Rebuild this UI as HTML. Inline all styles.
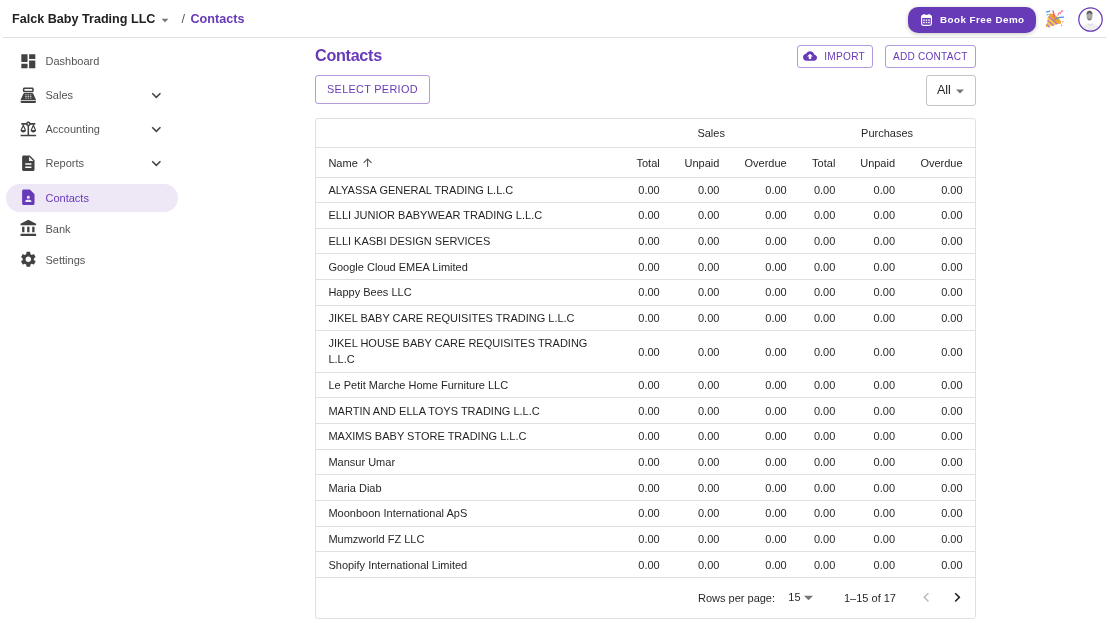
<!DOCTYPE html>
<html><head><meta charset="utf-8">
<style>
*{box-sizing:border-box;margin:0;padding:0}
html{background:#fff}html,body{width:1111px;height:623px;overflow:hidden;font-family:"Liberation Sans",sans-serif;color:rgba(0,0,0,0.87)}
.abs{position:absolute}
#topline{position:absolute;left:3px;top:37px;width:1103px;height:1px;background:#e0e0e0}
#company{position:absolute;left:12px;top:12px;font-size:12.6px;font-weight:700;color:#212121;white-space:nowrap;line-height:15px}
#caret1{position:absolute;left:161px;top:18px}
#slash{position:absolute;left:181.5px;top:12px;font-size:12.6px;color:#555;line-height:15px}
#crumb{position:absolute;left:190.5px;top:12px;font-size:12.6px;font-weight:700;color:#673ab7;line-height:15px}
#demo{position:absolute;left:908px;top:7px;width:128px;height:26px;border-radius:10px;background:#673ab7;box-shadow:0 1px 4px rgba(0,0,0,0.22);color:#fff;font-weight:700;font-size:9.8px;letter-spacing:0.48px;white-space:nowrap}
#demo svg{position:absolute;left:12.6px;top:6.8px}
#demo span{position:absolute;left:32px;top:6.9px;line-height:12px}
#emoji{position:absolute;left:1045px;top:9px}
#avatar{position:absolute;left:1077.7px;top:7.4px}
.nav{position:absolute;left:0;width:180px;height:28px}
.nav svg{position:absolute;left:18.5px}
.nav .t{position:absolute;left:45.5px;font-size:11px;color:rgba(0,0,0,0.7);line-height:13px}
.nav .chev{position:absolute;left:147px}
#title{position:absolute;left:315px;top:46px;font-size:16.2px;letter-spacing:-0.3px;font-weight:700;color:#673ab7;line-height:19px}
.btn{position:absolute;border:1px solid rgba(103,58,183,0.5);border-radius:3px;color:#673ab7;font-size:11px;letter-spacing:0.3px;white-space:nowrap;line-height:13px}
#card{position:absolute;left:315px;top:118px;width:661px;height:501px;border:1px solid #e0e0e0;border-radius:3px;overflow:hidden}
table{border-collapse:collapse;table-layout:fixed;width:659px;font-size:11px}
td,th{padding:5.3px 12.43px 3.77px;border-bottom:1px solid #e0e0e0;text-align:right;font-weight:400;line-height:15.6px;white-space:nowrap}
td.n,th.n{text-align:left;white-space:normal}
tr.g th{height:28px;text-align:center;padding:1.5px 12.43px 0}
tr.h th{height:30px;padding:3px 12.43px 0}

</style></head><body><div id="wrap" style="position:absolute;left:0;top:0;width:1111px;height:623px;will-change:transform">
<div id="topline"></div>
<div id="company">Falck Baby Trading LLC</div>
<svg id="caret1" width="8" height="5" viewBox="0 0 8 5"><path d="M0.5 0.8h7l-3.5 3.5z" fill="#757575"/></svg>
<div id="slash">/</div>
<div id="crumb">Contacts</div>

<div id="demo"><svg width="11" height="12" viewBox="0 0 11 12"><rect x="2" y="0" width="1.5" height="2.4" rx="0.5" fill="#fff"/><rect x="7.5" y="0" width="1.5" height="2.4" rx="0.5" fill="#fff"/><rect x="0.6" y="1.4" width="9.8" height="10" rx="1.8" fill="none" stroke="#fff" stroke-width="1.2"/><rect x="0.6" y="1.4" width="9.8" height="2.6" rx="1" fill="#fff"/><g fill="#fff"><rect x="2.2" y="5.4" width="1.6" height="1.4"/><rect x="4.7" y="5.4" width="1.6" height="1.4"/><rect x="7.2" y="5.4" width="1.6" height="1.4"/><rect x="2.2" y="7.8" width="1.6" height="1.4"/><rect x="4.7" y="7.8" width="1.6" height="1.4"/><rect x="7.2" y="7.8" width="1.6" height="1.4"/></g></svg><span>Book Free Demo</span></div>
<svg id="emoji" width="20" height="20" viewBox="0 0 20 20">
<path d="M0.6 18.6 L4.4 4.8 L16 14.2 Z" fill="#f6c843"/>
<ellipse cx="10.2" cy="9.5" rx="7.4" ry="2.5" transform="rotate(39 10.2 9.5)" fill="#eaa92a"/>
<path d="M1.4 15.4 L4.6 18.2" stroke="#b768d6" stroke-width="1.2"/>
<path d="M2.5 11.4 L8.8 16.8" stroke="#b768d6" stroke-width="1.2"/>
<path d="M3.6 7.4 L12 15" stroke="#b768d6" stroke-width="1.2"/>
<path d="M9.8 11 C11.6 8.6 14 8 19 8.2" stroke="#4a8fe0" stroke-width="1.2" fill="none"/>
<path d="M9.6 8.6 C9.4 6 8.8 4 7.8 1.6" stroke="#ef4b6c" stroke-width="1.2" fill="none"/>
<path d="M12.8 6.6 L14 3.6 L15.4 4.6 L16.6 1.6 L18.2 2.4" stroke="#ef4b6c" stroke-width="0.9" fill="none"/>
<path d="M1.2 3.4 C2.4 1.4 3.8 4 5 1.4" stroke="#4a8fe0" stroke-width="1.1" fill="none"/>
<path d="M1.6 6 L3.6 5.4" stroke="#4a8fe0" stroke-width="0.9"/>
<circle cx="3" cy="9" r="0.6" fill="#ef4b6c"/>
<circle cx="17.8" cy="12.8" r="0.7" fill="#f08a5d"/>
<circle cx="16.6" cy="16.2" r="0.6" fill="#ef4b6c"/>
<circle cx="12.6" cy="14.4" r="0.5" fill="#4a8fe0"/>
</svg>
<svg id="avatar" width="25" height="25" viewBox="0 0 25 25">
<circle cx="12.5" cy="12.5" r="11.6" fill="#fdfdfd"/>
<path d="M3.5 20.5 C6 17.6 9 17 12.5 16.8 C16 17 19 17.6 21.5 20.5 C19 23.5 15.5 24.2 12.5 24.2 C9.5 24.2 6 23.5 3.5 20.5Z" fill="#efefef"/>
<ellipse cx="11.5" cy="9.6" rx="2.9" ry="4.1" fill="#a8a8a8"/>
<path d="M8.5 8.4 C8.3 5 9.7 3.8 11.5 3.8 C13.3 3.8 14.7 4.8 14.5 8.4 C13.9 6.6 12.1 6.2 11.5 6.2 C10.7 6.2 9.1 6.6 8.5 8.4Z" fill="#5e5e5e"/>
<path d="M9.9 11.6 C10.7 12.8 12.3 12.8 13.1 11.6" stroke="#555" stroke-width="0.8" fill="none"/>
<path d="M9.8 16.6 L12.4 18.6 L15 16.6" stroke="#c8c8c8" stroke-width="0.7" fill="none"/>
<circle cx="12.5" cy="12.5" r="11.7" fill="none" stroke="#673ab7" stroke-width="1.25"/>
</svg>

<!-- sidebar -->
<div class="nav" style="top:47px">
 <svg style="top:4.7px" width="18.65" height="18.65" viewBox="0 0 24 24"><path fill="#424242" d="M3 13h8V3H3v10zm0 8h8v-6H3v6zm10 0h8V11h-8v10zm0-18v6h8V3h-8z"/></svg>
 <div class="t" style="top:8px">Dashboard</div>
</div>
<div class="nav" style="top:81px">
 <svg style="top:4.7px" width="18.65" height="18.65" viewBox="0 0 24 24"><path fill="#424242" d="M17 2H7c-1.1 0-2 .9-2 2v2c0 1.1.9 2 2 2h10c1.1 0 2-.9 2-2V4c0-1.1-.9-2-2-2zm0 4H7V4h10v2zm3 16H4c-1.1 0-2-.9-2-2v-1h20v1c0 1.1-.9 2-2 2zm-1.47-11.81C18.21 9.470 17.49 9 16.7 9H7.3c-.79 0-1.51.47-1.830 1.19L2 18h20l-3.47-7.81zM9.5 16h-1c-.28 0-.5-.22-.5-.5s.22-.5.5-.5h1c.28 0 .5.22.5.5s-.22.5-.5.5zm0-2h-1c-.28 0-.5-.22-.5-.5s.22-.5.5-.5h1c.28 0 .5.22.5.5s-.22.5-.5.5zm0-2h-1c-.28 0-.5-.22-.5-.5s.22-.5.5-.5h1c.28 0 .5.22.5.5s-.22.5-.5.5zm3 4h-1c-.28 0-.5-.22-.5-.5s.22-.5.5-.5h1c.28 0 .5.22.5.5s-.22.5-.5.5zm0-2h-1c-.28 0-.5-.22-.5-.5s.22-.5.5-.5h1c.28 0 .5.22.5.5s-.22.5-.5.5zm0-2h-1c-.28 0-.5-.22-.5-.5s.22-.5.5-.5h1c.28 0 .5.22.5.5s-.22.5-.5.5zm3 4h-1c-.28 0-.5-.22-.5-.5s.22-.5.5-.5h1c.28 0 .5.22.5.5s-.22.5-.5.5zm0-2h-1c-.28 0-.5-.22-.5-.5s.22-.5.5-.5h1c.28 0 .5.22.5.5s-.22.5-.5.5zm0-2h-1c-.28 0-.5-.22-.5-.5s.22-.5.5-.5h1c.28 0 .5.22.5.5s-.22.5-.5.5z"/></svg>
 <div class="t" style="top:8px">Sales</div>
 <svg class="chev" style="top:5px" width="18.65" height="18.65" viewBox="0 0 24 24"><path fill="#424242" d="M16.59 8.59 12 13.17 7.41 8.59 6 10l6 6 6-6z"/></svg>
</div>
<div class="nav" style="top:115px">
 <svg style="top:4.7px" width="18.65" height="18.65" viewBox="0 0 24 24"><path fill="#424242" d="M13 7.83c.85-.3 1.53-.98 1.83-1.83H18l-3 7c0 1.66 1.57 3 3.5 3s3.5-1.34 3.5-3l-3-7h2V4h-6.17c-.41-1.170-1.52-2-2.83-2s-2.42.83-2.83 2H3v2h2l-3 7c0 1.66 1.57 3 3.5 3S9 14.66 9 13L6 6h3.17c.3.85.98 1.53 1.83 1.83V19H2v2h20v-2h-9V7.83zM20.37 13h-3.74l1.87-4.37L20.37 13zm-13 0H3.63L5.5 8.63 7.37 13zM12 6c-.55 0-1-.45-1-1s.45-1 1-1 1 .45 1 1-.45 1-1 1z"/></svg>
 <div class="t" style="top:8px">Accounting</div>
 <svg class="chev" style="top:5px" width="18.65" height="18.65" viewBox="0 0 24 24"><path fill="#424242" d="M16.59 8.59 12 13.17 7.41 8.59 6 10l6 6 6-6z"/></svg>
</div>
<div class="nav" style="top:149px">
 <svg style="top:4.7px" width="18.65" height="18.65" viewBox="0 0 24 24"><path fill="#424242" d="M14 2H6c-1.1 0-1.99.9-1.99 2L4 20c0 1.1.89 2 1.99 2H18c1.1 0 2-.9 2-2V8l-6-6zm2 16H8v-2h8v2zm0-4H8v-2h8v2zm-3-5V3.5L18.5 9H13z"/></svg>
 <div class="t" style="top:8px">Reports</div>
 <svg class="chev" style="top:5px" width="18.65" height="18.65" viewBox="0 0 24 24"><path fill="#424242" d="M16.59 8.59 12 13.17 7.41 8.59 6 10l6 6 6-6z"/></svg>
</div>
<div class="abs" style="left:6px;top:184px;width:172px;height:28px;border-radius:14px;background:#ede7f6"></div>
<div class="nav" style="top:183.5px">
 <svg style="top:4.7px" width="18.65" height="18.65" viewBox="0 0 24 24"><path fill="#673ab7" d="M14 2H6c-1.1 0-1.99.9-1.99 2L4 20c0 1.1.89 2 1.99 2H18c1.1 0 2-.9 2-2V8l-6-6zm-2 8c1.1 0 2 .9 2 2s-.9 2-2 2-2-.9-2-2 .9-2 2-2zm4 8H8v-.57c0-.81.48-1.53 1.22-1.85.85-.37 1.790-.58 2.78-.58.99 0 1.93.21 2.78.58.74.32 1.22 1.04 1.22 1.85V18z"/></svg>
 <div class="t" style="top:8px;color:#673ab7">Contacts</div>
</div>
<div class="nav" style="top:214.5px">
 <svg style="top:4.7px" width="18.65" height="18.65" viewBox="0 0 24 24"><path fill="#424242" d="M4 10h3v7H4zm6.5 0h3v7h-3zM2 19h20v3H2zm15-9h3v7h-3zm-5-9L2 6v2h20V6z"/></svg>
 <div class="t" style="top:8px">Bank</div>
</div>
<div class="nav" style="top:245.5px">
 <svg style="top:4.7px" width="18.65" height="18.65" viewBox="0 0 24 24"><path fill="#424242" d="M19.14 12.94c.04-.3.06-.61.06-.94 0-.32-.02-.64-.07-.94l2.03-1.58c.18-.14.23-.41.12-.61l-1.92-3.32c-.12-.22-.37-.29-.59-.22l-2.39.96c-.5-.38-1.03-.7-1.62-.94l-.36-2.54c-.04-.24-.24-.41-.48-.41h-3.84c-.24 0-.43.17-.47.41l-.36 2.540c-.59.24-1.13.57-1.62.94l-2.39-.96c-.22-.08-.47 0-.59.22L2.74 8.87c-.12.21-.08.47.12.61l2.03 1.58c-.05.3-.09.63-.09.94s.02.64.07.94l-2.03 1.58c-.18.14-.23.41-.12.61l1.92 3.32c.12.22.37.29.59.22l2.39-.96c.5.38 1.03.7 1.62.94l.36 2.54c.05.24.24.41.48.41h3.84c.24 0 .44-.17.47-.41l.36-2.54c.59-.24 1.13-.56 1.62-.94l2.39.96c.22.08.47 0 .59-.22l1.92-3.32c.12-.22.07-.47-.12-.61l-2.010-1.58zM12 15.6c-1.98 0-3.6-1.62-3.6-3.6s1.62-3.6 3.6-3.6 3.6 1.62 3.6 3.6-1.62 3.6-3.6 3.6z"/></svg>
 <div class="t" style="top:8px">Settings</div>
</div>

<!-- main -->
<div id="title">Contacts</div>
<div class="btn" style="left:315px;top:75px;width:115px;height:28.5px"><span class="abs" style="left:11px;top:6.7px;font-size:10.88px;letter-spacing:0.31px">SELECT PERIOD</span></div>
<div class="btn" style="left:797px;top:45px;width:75.5px;height:22.5px">
 <svg class="abs" style="left:4.8px;top:2.9px" width="14" height="14" viewBox="0 0 24 24"><path fill="#673ab7" d="M19.35 10.04C18.67 6.59 15.64 4 12 4 9.11 4 6.6 5.640 5.35 8.04 2.34 8.36 0 10.91 0 14c0 3.31 2.69 6 6 6h13c2.76 0 5-2.24 5-5 0-2.64-2.05-4.78-4.65-4.96zM14 13v4h-4v-4H7l5-5 5 5h-3z"/></svg>
 <span class="abs" style="left:26.3px;top:4px;font-size:10.1px;letter-spacing:0.27px">IMPORT</span></div>
<div class="btn" style="left:885px;top:45px;width:91px;height:22.5px"><span class="abs" style="left:7px;top:4px;font-size:10.1px;letter-spacing:0.22px">ADD CONTACT</span></div>
<div class="abs" style="left:926px;top:75px;width:50px;height:30.5px;border:1px solid rgba(0,0,0,0.23);border-radius:3px">
 <span class="abs" style="left:10.1px;top:6.7px;font-size:12.6px;letter-spacing:-0.2px;line-height:15px">All</span>
 <svg class="abs" style="left:29.4px;top:10.9px" width="8" height="8.2" viewBox="7 7 10 10"><path fill="#757575" d="M7 10l5 5 5-5z"/></svg>
</div>

<div id="card">
<table>
<colgroup><col style="width:306.7px"><col style="width:48.9px"><col style="width:59.6px"><col style="width:67.2px"><col style="width:48.6px"><col style="width:59.6px"><col style="width:67.4px"></colgroup>
<thead>
<tr class="g"><th class="n"></th><th colspan="3">Sales</th><th colspan="3">Purchases</th></tr>
<tr class="h"><th class="n">Name <svg style="vertical-align:-2.6px;margin-left:0.6px" width="13.2" height="13.2" viewBox="0 0 24 24"><path fill="#555" d="M4 12l1.41 1.41L11 7.830V20h2V7.83l5.58 5.59L20 12l-8-8-8 8z"/></svg></th><th>Total</th><th>Unpaid</th><th>Overdue</th><th>Total</th><th>Unpaid</th><th>Overdue</th></tr>
</thead>
<tbody>
<tr><td class="n">ALYASSA GENERAL TRADING L.L.C</td><td>0.00</td><td>0.00</td><td>0.00</td><td>0.00</td><td>0.00</td><td>0.00</td></tr>
<tr><td class="n">ELLI JUNIOR BABYWEAR TRADING L.L.C</td><td>0.00</td><td>0.00</td><td>0.00</td><td>0.00</td><td>0.00</td><td>0.00</td></tr>
<tr><td class="n">ELLI KASBI DESIGN SERVICES</td><td>0.00</td><td>0.00</td><td>0.00</td><td>0.00</td><td>0.00</td><td>0.00</td></tr>
<tr><td class="n">Google Cloud EMEA Limited</td><td>0.00</td><td>0.00</td><td>0.00</td><td>0.00</td><td>0.00</td><td>0.00</td></tr>
<tr><td class="n">Happy Bees LLC</td><td>0.00</td><td>0.00</td><td>0.00</td><td>0.00</td><td>0.00</td><td>0.00</td></tr>
<tr><td class="n">JIKEL BABY CARE REQUISITES TRADING L.L.C</td><td>0.00</td><td>0.00</td><td>0.00</td><td>0.00</td><td>0.00</td><td>0.00</td></tr>
<tr><td class="n" style="line-height:15.9px;padding-top:4.4px;padding-bottom:4.1px">JIKEL HOUSE BABY CARE REQUISITES TRADING L.L.C</td><td>0.00</td><td>0.00</td><td>0.00</td><td>0.00</td><td>0.00</td><td>0.00</td></tr>
<tr><td class="n">Le Petit Marche Home Furniture LLC</td><td>0.00</td><td>0.00</td><td>0.00</td><td>0.00</td><td>0.00</td><td>0.00</td></tr>
<tr><td class="n">MARTIN AND ELLA TOYS TRADING L.L.C</td><td>0.00</td><td>0.00</td><td>0.00</td><td>0.00</td><td>0.00</td><td>0.00</td></tr>
<tr><td class="n">MAXIMS BABY STORE TRADING L.L.C</td><td>0.00</td><td>0.00</td><td>0.00</td><td>0.00</td><td>0.00</td><td>0.00</td></tr>
<tr><td class="n">Mansur Umar</td><td>0.00</td><td>0.00</td><td>0.00</td><td>0.00</td><td>0.00</td><td>0.00</td></tr>
<tr><td class="n">Maria Diab</td><td>0.00</td><td>0.00</td><td>0.00</td><td>0.00</td><td>0.00</td><td>0.00</td></tr>
<tr><td class="n">Moonboon International ApS</td><td>0.00</td><td>0.00</td><td>0.00</td><td>0.00</td><td>0.00</td><td>0.00</td></tr>
<tr><td class="n">Mumzworld FZ LLC</td><td>0.00</td><td>0.00</td><td>0.00</td><td>0.00</td><td>0.00</td><td>0.00</td></tr>
<tr><td class="n">Shopify International Limited</td><td>0.00</td><td>0.00</td><td>0.00</td><td>0.00</td><td>0.00</td><td>0.00</td></tr>
</tbody>
</table>
<div class="abs" style="left:0;top:459px;width:659px;height:41px;font-size:11px">
 <span class="abs" style="left:382px;top:14px">Rows per page:</span>
 <span class="abs" style="left:472.3px;top:12.5px">15</span>
 <svg class="abs" style="left:488px;top:15px" width="9" height="9" viewBox="7 7 10 10"><path fill="#757575" d="M7 10l5 5 5-5z"/></svg>
 <span class="abs" style="left:528px;top:14px">1–15 of 17</span>
 <svg class="abs" style="left:601.4px;top:9.6px" width="18.65" height="18.65" viewBox="0 0 24 24"><path fill="#bdbdbd" d="M15.41 16.59 10.83 12l4.58-4.59L14 6l-6 6 6 6 1.41-1.41z"/></svg>
 <svg class="abs" style="left:631.9px;top:9.6px" width="18.65" height="18.65" viewBox="0 0 24 24"><path fill="#212121" d="M8.59 16.59 13.17 12 8.59 7.41 10 6l6 6-6 6-1.41-1.41z"/></svg>
</div>
</div>
</div></body></html>
